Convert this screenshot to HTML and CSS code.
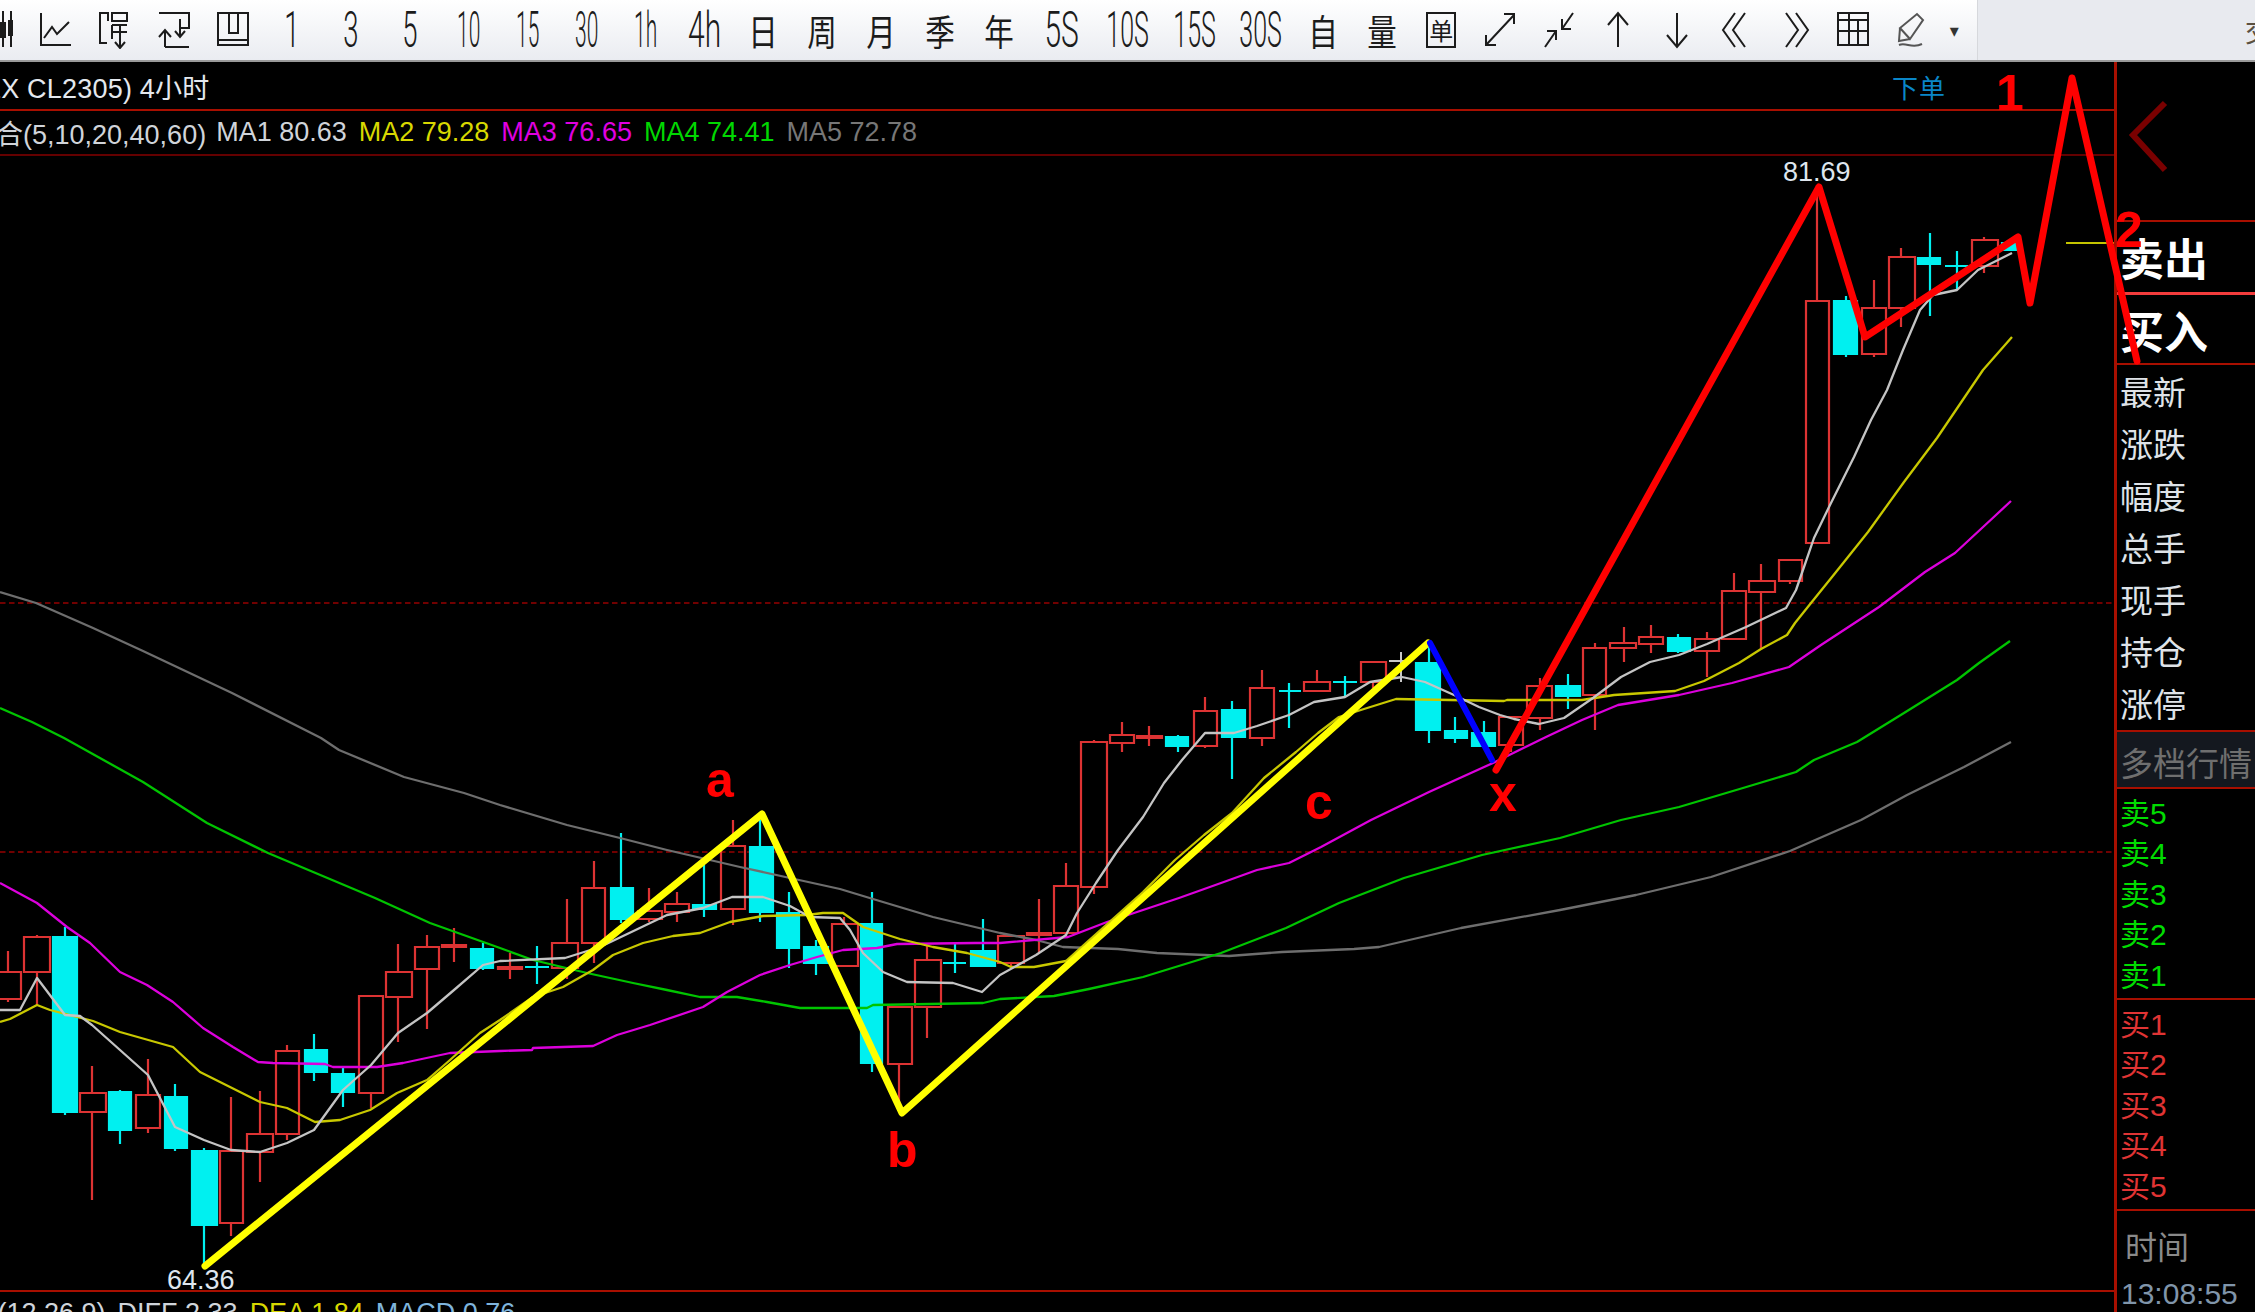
FILE: index.html
```html
<!DOCTYPE html>
<html lang="zh-CN">
<head>
<meta charset="utf-8">
<title>CL2305 4小时</title>
<link rel="stylesheet" href="styles.css">
</head>
<body>
<div class="app">
  <header class="toolbar">
    <div class="tools">
      <span class="tool"><svg class="ico" viewBox="0 0 32 38"><path d="M22 0V36M30 0V36M20 12H24V26H20ZM28 10H32V24H28Z"/></svg></span>
      <span class="tool"><svg class="ico" viewBox="0 0 32 38"><path d="M1 2V34H31M4 27L12 16L17 23L29 11"/></svg></span>
      <span class="tool"><svg class="ico" viewBox="0 0 32 38"><path d="M9 10V2H1V32H8M13 2H28V10H13ZM13 14H28M13 21H28M13 14V28M21 14V37M16 31L21 37L26 31"/></svg></span>
      <span class="tool"><svg class="ico" viewBox="0 0 32 38"><path d="M1 2H31V17H22M7 36H31M7 36V19M1 26L7 19L13 26M22 8V26M17 20L22 26L27 20"/></svg></span>
      <span class="tool"><svg class="ico" viewBox="0 0 32 38"><path d="M1 2H31V34H1ZM1 29H31M12 2V22H21V2"/></svg></span>
      <span class="tool"><span class="txt n1">1</span></span>
      <span class="tool"><span class="txt n1">3</span></span>
      <span class="tool"><span class="txt n1">5</span></span>
      <span class="tool"><span class="txt n2">10</span></span>
      <span class="tool"><span class="txt n2">15</span></span>
      <span class="tool"><span class="txt n2">30</span></span>
      <span class="tool"><span class="txt n2">1h</span></span>
      <span class="tool"><span class="txt n2w">4h</span></span>
      <span class="tool"><span class="txt cjk">日</span></span>
      <span class="tool"><span class="txt cjk">周</span></span>
      <span class="tool"><span class="txt cjk">月</span></span>
      <span class="tool"><span class="txt cjk">季</span></span>
      <span class="tool"><span class="txt cjk">年</span></span>
      <span class="tool wide"><span class="txt n2w">5S</span></span>
      <span class="tool wide"><span class="txt n3">10S</span></span>
      <span class="tool wide"><span class="txt n3">15S</span></span>
      <span class="tool wide"><span class="txt n3">30S</span></span>
      <span class="tool"><span class="txt cjk">自</span></span>
      <span class="tool"><span class="txt cjk">量</span></span>
      <span class="tool"><span class="boxed">单</span></span>
      <span class="tool"><svg class="ico" viewBox="0 0 32 38"><path d="M2 34L30 4M20 3H30V13M2 24V34H12"/></svg></span>
      <span class="tool"><svg class="ico" viewBox="0 0 32 38"><path d="M2 36L13 20M4 20H13V29M30 2L19 18M19 8V18H28"/></svg></span>
      <span class="tool"><svg class="ico" viewBox="0 0 32 38"><path d="M16 2V36M6 14L16 2L26 14"/></svg></span>
      <span class="tool"><svg class="ico" viewBox="0 0 32 38"><path d="M16 2V36M6 24L16 36L26 24"/></svg></span>
      <span class="tool"><svg class="ico" viewBox="0 0 32 38"><path d="M15 2L3 19L15 36M25 2L13 19L25 36"/></svg></span>
      <span class="tool"><svg class="ico" viewBox="0 0 32 38"><path d="M7 2L19 19L7 36M17 2L29 19L17 36"/></svg></span>
      <span class="tool"><svg class="ico" viewBox="0 0 32 38"><path d="M1 2H31V34H1ZM1 9H31M1 20H31M12 2V34M21 9V34"/></svg></span>
      <span class="tool"><svg class="ico pen" viewBox="0 0 32 38"><path d="M14 28L4 17L21 3L27 9ZM4 17L3 30L14 28M3 34C10 31 16 38 26 33"/></svg></span>
      <span class="caret">▾</span>
    </div>
    <div class="tool-rest"><span>交</span></div>
  </header>

  <main class="body">
    <section class="chart">
      <div class="title-row">
        <span class="title">EX CL2305) 4小时</span>
        <span class="order">下单</span>
      </div>
      <div class="ma-row">
        <span class="w ma-lead">合(5,10,20,40,60)</span>
        <span class="w">MA1 80.63</span>
        <span class="y">MA2 79.28</span>
        <span class="m">MA3 76.65</span>
        <span class="g">MA4 74.41</span>
        <span class="d">MA5 72.78</span>
      </div>
      <svg class="plot" viewBox="0 156 2114 1134" width="2114" height="1134">
        <path class="grid" d="M0 603H2114M0 852H2114"/>
        <path class="tick" d="M2066 243H2114"/>
        <path class="up" d="M8 951V972M-6 972H21V999H-6ZM8 999V1002M37 935V937M24 937H50V972H24ZM37 972V1005M92 1066V1093M80 1093H106V1112H80ZM92 1112V1200M148 1059V1095M136 1095H160V1128H136ZM148 1128V1133M231 1097V1151M220 1151H243V1223H220ZM231 1223V1236M260 1091V1134M247 1134H273V1152H247ZM260 1152V1182M287 1045V1051M276 1051H299V1134H276ZM287 1134V1140M359 996H383V1093H359ZM371 1093V1108M398 944V972M386 972H412V997H386ZM398 997V1042M427 935V947M415 947H439V969H415ZM427 969V1029M454 928V962M442 945H466V947H442ZM510 953V979M498 967H522V969H498ZM567 899V943M552 943H578V968H552ZM567 968V979M594 861V888M582 888H605V943H582ZM594 943V963M649 888V911M638 911H662V919H638ZM649 919V922M677 892V904M665 904H689V912H665ZM677 912V922M733 820V846M721 846H745V909H721ZM733 909V925M844 917V924M832 924H858V966H832ZM888 1007H912V1064H888ZM899 1064V1108M927 945V960M915 960H941V1007H915ZM927 1007V1038M998 936H1024V963H998ZM1011 963V968M1039 899V953M1027 933H1051V935H1027ZM1066 863V886M1054 886H1078V933H1054ZM1066 933V937M1094 740V742M1081 742H1107V887H1081ZM1094 887V894M1122 722V735M1110 735H1134V743H1110ZM1122 743V752M1149 726V746M1137 736H1162V738H1137ZM1205 697V711M1194 711H1217V746H1194ZM1205 746V748M1262 670V688M1250 688H1274V738H1250ZM1262 738V746M1317 670V682M1304 682H1330V691H1304ZM1361 662H1386V682H1361ZM1373 682V688M1499 717H1523V745H1499ZM1511 745V752M1540 678V686M1527 686H1552V718H1527ZM1540 718V730M1595 643V648M1583 648H1606V695H1583ZM1595 695V730M1624 627V643M1610 643H1636V648H1610ZM1624 648V662M1651 625V637M1639 637H1663V644H1639ZM1651 644V653M1707 632V639M1695 639H1719V651H1695ZM1707 651V677M1734 573V591M1722 591H1746V639H1722ZM1761 564V581M1749 581H1775V592H1749ZM1761 592V650M1779 560H1802V581H1779ZM1790 581V584M1817 185V301M1806 301H1829V543H1806ZM1874 280V308M1862 308H1886V354H1862ZM1874 354V357M1901 248V257M1889 257H1915V308H1889ZM1901 308V327M1984 237V240M1972 240H1998V266H1972ZM1984 266V273"/>
        <path class="down" d="M53 937H77V1112H53ZM65 927V1115M109 1092H131V1130H109ZM120 1090V1144M165 1097H187V1148H165ZM175 1084V1151M192 1151H217V1225H192ZM204 1148V1267M305 1050H327V1072H305ZM314 1034V1081M332 1074H354V1092H332ZM343 1067V1107M471 949H493V968H471ZM483 943V970M525 967H549M537 946V984M611 888H633V919H611ZM621 833V923M693 905H716V909H693ZM704 865V917M750 847H773V912H750ZM760 820V922M777 913H799V948H777ZM789 892V968M804 947H828V963H804ZM816 940V975M861 924H882V1063H861ZM872 892V1072M943 963H966M955 943V973M971 951H995V966H971ZM983 919V966M1166 737H1188V746H1166ZM1178 735V752M1222 710H1245V737H1222ZM1232 701V779M1279 691H1301M1289 683V728M1333 682H1357M1345 676V697M1416 663H1440V730H1416ZM1429 645V743M1445 731H1467V738H1445ZM1455 717V743M1472 733H1495V746H1472ZM1484 721V746M1556 686H1580V696H1556ZM1568 674V709M1668 638H1690V651H1668ZM1678 634V653M1834 301H1857V354H1834ZM1846 296V357M1918 258H1940V264H1918ZM1930 233V316M1945 266H1968M1957 251V290M2002 243H2020V250H2002Z"/>
        <path class="doji" d="M1389 661H1412M1401 652V682"/>
        <polyline class="ma5" points="0,592 36,603 93,628 143,651 232,693 321,738 339,750 404,777 464,793 500,805 567,825 620,838 667,850 740,867 790,878 840,889 873,899 933,917 1000,933 1036,940 1063,947 1118,949 1157,953 1229,956 1282,952 1354,949 1379,947 1461,928 1560,910 1636,895 1711,877 1790,851 1861,820 1907,795 1964,767 2011,742"/>
        <polyline class="ma4" points="0,708 32,722 64,738 143,782 207,823 268,853 375,898 430,923 500,948 533,960 587,973 633,983 667,990 700,997 737,997 767,1002 800,1008 867,1008 873,1005 930,1004 983,1003 1000,999 1054,996 1089,989 1143,977 1221,953 1286,928 1339,903 1404,878 1482,855 1560,838 1621,820 1679,807 1743,788 1796,772 1814,760 1857,742 1904,713 1957,680 1979,663 2010,641"/>
        <polyline class="ma3" points="0,883 37,903 67,927 90,943 120,972 147,985 173,1002 203,1028 233,1047 258,1062 273,1063 325,1064 333,1067 377,1067 403,1063 450,1053 500,1051 532,1050 533,1048 593,1046 617,1035 650,1025 703,1007 727,992 760,975 790,965 817,957 843,950 877,948 897,944 975,943 1000,943 1068,937 1107,922 1143,910 1179,898 1221,883 1257,870 1289,863 1321,847 1371,820 1429,792 1493,763 1546,737 1582,720 1618,705 1679,695 1732,683 1789,667 1821,645 1879,607 1925,572 1955,553 1996,515 2011,501"/>
        <polyline class="ma2" points="0,1022 10,1019 37,1005 50,1010 93,1021 120,1032 173,1047 200,1072 260,1102 287,1108 315,1122 340,1120 370,1110 397,1093 427,1080 450,1060 480,1033 500,1020 533,997 563,987 593,970 613,955 643,943 673,936 700,933 730,922 763,916 807,915 823,913 843,913 863,927 900,939 933,947 967,953 1000,962 1011,967 1034,967 1066,961 1086,943 1143,892 1175,860 1204,835 1232,813 1264,778 1296,752 1318,733 1339,717 1364,709 1396,699 1504,701 1507,700 1582,700 1614,695 1675,691 1704,681 1739,663 1761,649 1787,635 1795,623 1811,603 1832,577 1868,532 1904,482 1937,438 1983,370 2012,337"/>
        <polyline class="ma1" points="0,1010 20,1010 37,978 65,1015 80,1016 92,1025 120,1050 148,1075 175,1127 204,1140 231,1150 260,1152 287,1143 314,1130 343,1090 371,1065 398,1033 427,1013 454,990 483,965 500,961 565,958 600,947 667,915 703,908 732,897 763,897 790,906 810,917 840,918 850,930 863,953 883,972 907,982 953,983 982,992 1000,975 1036,955 1066,935 1077,913 1096,883 1118,850 1143,817 1164,783 1182,760 1205,733 1234,733 1257,726 1289,715 1314,702 1345,697 1370,682 1402,677 1425,682 1454,695 1479,707 1500,715 1514,719 1539,724 1564,718 1593,698 1621,677 1650,662 1679,655 1707,644 1746,627 1786,608 1796,590 1804,567 1814,538 1830,505 1854,457 1871,420 1887,390 1903,350 1920,310 1933,295 1957,290 1978,270 1998,260 2012,253"/>
        <text class="price" x="1783" y="181">81.69</text>
        <text class="price" x="167" y="1289">64.36</text>
      </svg>
      <div class="macd-row">
        <span class="w macd-lead">/(12,26,9)</span>
        <span class="w">DIFF 2.33</span>
        <span class="y">DEA 1.84</span>
        <span class="b">MACD 0.76</span>
      </div>
    </section>

    <aside class="side">
      <div class="side-top">
        <svg class="chev" viewBox="0 0 44 76" width="44" height="76"><polyline points="37,3 5,35 37,70"/></svg>
      </div>
      <div class="big sell">卖出</div>
      <div class="big buy">买入</div>
      <div class="quotes">
        <div>最新</div><div>涨跌</div><div>幅度</div><div>总手</div><div>现手</div><div>持仓</div><div>涨停</div>
      </div>
      <div class="depth-head">多档行情</div>
      <div class="book asks">
        <div>卖5</div><div>卖4</div><div>卖3</div><div>卖2</div><div>卖1</div>
      </div>
      <div class="book bids">
        <div>买1</div><div>买2</div><div>买3</div><div>买4</div><div>买5</div>
      </div>
      <div class="clock">
        <div class="clock-label">时间</div>
        <div class="clock-value">13:08:55</div>
      </div>
    </aside>
  </main>

  <svg class="marks" viewBox="0 0 2255 1312" width="2255" height="1312">
    <polyline class="mk-y" points="205,1266 762,814 902,1113 1428,643"/>
    <polyline class="mk-b" points="1430,643 1492,760"/>
    <polyline class="mk-r" points="1496,770 1819,187 1865,337 2018,237 2030,303 2072,78 2137,361"/>
    <text class="mk-t" x="1996" y="110">1</text>
    <text class="mk-t" x="2115" y="247">2</text>
    <text class="mk-t" x="706" y="797">a</text>
    <text class="mk-t" x="887" y="1167">b</text>
    <text class="mk-t" x="1305" y="819">c</text>
    <text class="mk-t" x="1489" y="811">x</text>
  </svg>
</div>
</body>
</html>
```
FILE: styles.css
```css
* { box-sizing: border-box; }
html, body { margin: 0; padding: 0; background: #000; }
body { font-family: "Liberation Sans", "Noto Sans CJK SC", sans-serif; }

.app { position: relative; width: 2255px; height: 1312px; overflow: hidden; display: flex; flex-direction: column; background: #000; }

/* toolbar */
.toolbar { height: 62px; flex: none; display: flex; border-bottom: 2px solid #9a9a9a; }
.tools { width: 1978px; flex: none; display: flex; align-items: center; overflow: hidden; background: linear-gradient(#ffffff, #eaecf1); border-right: 1px solid #d6d8dc; }
.tool { width: 58.9px; flex: none; height: 38px; display: flex; align-items: center; justify-content: center; color: #1c1c1c; }
.tool:first-child { margin-left: -32px; }
.tool.wide { width: 66.5px; }
.tool-rest { flex: 1; display: flex; justify-content: flex-end; align-items: center; overflow: hidden; background: #e8eaef; color: #5a5040; font: 26px "Noto Sans CJK SC", sans-serif; }
.tool-rest span { margin-right: -16px; }
.ico { width: 32px; height: 38px; fill: none; stroke: #1c1c1c; stroke-width: 2; }
.ico.pen { stroke: #555; }
.txt { display: inline-block; font-family: "Roboto", "Liberation Sans", sans-serif; font-weight: 300; font-size: 50px; line-height: 38px; }
.n1 { transform: scaleX(.55); }
.n2 { transform: scaleX(.42); }
.n2w { transform: scaleX(.6); }
.n3 { transform: scaleX(.5); }
.txt.cjk { font-family: "Noto Sans CJK SC", sans-serif; font-weight: 400; font-size: 36px; transform: scaleX(.82); }
.boxed { width: 30px; height: 36px; border: 2px solid #1c1c1c; display: flex; align-items: center; justify-content: center; font: 24px/30px "Noto Sans CJK SC", sans-serif; }
.caret { width: 20px; margin-left: 8px; color: #333; font: 18px "DejaVu Sans", sans-serif; }

/* layout */
.body { flex: 1; min-height: 0; display: flex; }
.chart { width: 2114px; flex: none; display: flex; flex-direction: column; overflow: hidden; }
.side { flex: 1; border-left: 3px solid #a80f00; min-width: 0; overflow: hidden; font-family: "Noto Sans CJK SC", sans-serif; color: #dfe3e8; }

/* chart head */
.title-row { height: 49px; flex: none; display: flex; align-items: center; justify-content: space-between; padding-right: 168px; border-bottom: 2px solid #a80f00; font-size: 27px; }
.title { margin-left: -17px; margin-top: 2px; color: #e4e8ee; letter-spacing: .2px; white-space: nowrap; }
.order { color: #0a86c8; font-size: 26px; margin-top: 2px; letter-spacing: 1px; }
.ma-row { height: 45px; flex: none; display: flex; align-items: center; gap: 12px; border-bottom: 2px solid #640000; font-size: 27px; white-space: nowrap; }
.ma-lead { margin-left: -4px; margin-right: -2px; }
.w { color: #d0d4da; }
.y { color: #d8d800; }
.m { color: #e000e0; }
.g { color: #00d800; }
.d { color: #777; }
.b { color: #7fb4dc; }

/* plot */
.plot { display: block; flex: none; }
.plot polyline { fill: none; stroke-width: 2.3; stroke-linejoin: round; }
.grid { stroke: #700000; stroke-width: 2; stroke-dasharray: 5.5 3.5; fill: none; }
.tick { stroke: #c4c400; stroke-width: 2; fill: none; }
.up { fill: none; stroke: #dd3333; stroke-width: 2.2; }
.down { fill: #00f0f0; stroke: #00f0f0; stroke-width: 2.2; }
.doji { stroke: #c8c8c8; stroke-width: 2; fill: none; }
.plot .ma1 { stroke: #c4c4c4; }
.plot .ma2 { stroke: #c8c800; }
.plot .ma3 { stroke: #dc00dc; }
.plot .ma4 { stroke: #00c400; }
.plot .ma5 { stroke: #6e6e6e; }
.price { fill: #dfe6ee; font-size: 27px; font-family: "Liberation Sans", sans-serif; }

.macd-row { height: 22px; flex: none; display: flex; gap: 12px; border-top: 2px solid #a80f00; font-size: 27px; line-height: 30px; white-space: nowrap; overflow: hidden; padding-top: 6px; }
.macd-lead { margin-left: -10px; }

/* side panel */
.side-top { height: 160px; border-bottom: 2px solid #a80f00; padding: 38px 0 0 11px; }
.chev { display: block; }
.chev polyline { fill: none; stroke: #7a0000; stroke-width: 6; }
.big { font-size: 44px; line-height: 71px; font-weight: 700; color: #fff; padding-left: 3px; }
.sell { height: 73px; border-bottom: 3px solid #f23c3c; }
.buy { height: 70px; border-bottom: 2px solid #a80f00; }
.quotes { height: 365px; padding-left: 3px; font-size: 33px; }
.quotes div { height: 52px; line-height: 52px; }
.depth-head { height: 59px; border-top: 2px solid #a80f00; border-bottom: 2px solid #a80f00; background: #14181f; color: #6f6f6f; font-size: 33px; line-height: 60px; padding-left: 3px; white-space: nowrap; }
.book { height: 211px; padding: 5px 0 0 3px; font-size: 30px; border-bottom: 2px solid #a80f00; font-family: "Liberation Sans", "Noto Sans CJK SC", sans-serif; }
.book div { height: 40.4px; line-height: 40px; }
.asks { color: #00dc00; }
.bids { color: #e03434; }
.clock { padding-left: 8px; }
.clock-label { margin-top: 12px; color: #8a8a8a; font-size: 32px; line-height: 44px; }
.clock-value { margin-top: 6px; margin-left: -4px; color: #8095aa; font-family: "Liberation Sans", sans-serif; font-size: 30px; line-height: 42px; white-space: nowrap; }

/* hand-drawn marks */
.marks { position: absolute; left: 0; top: 0; pointer-events: none; }
.marks polyline { fill: none; stroke-linejoin: round; stroke-linecap: round; }
.mk-y { stroke: #ffff00; stroke-width: 7; }
.mk-b { stroke: #0000ff; stroke-width: 6; }
.mk-r { stroke: #ff0000; stroke-width: 7; }
.mk-t { fill: #ff0000; font: 700 50px "Liberation Sans", sans-serif; }
```
